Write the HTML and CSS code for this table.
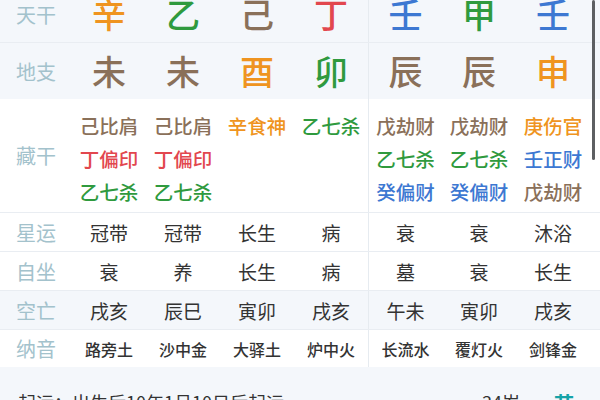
FILE: index.html
```html
<!DOCTYPE html>
<html lang="zh">
<head>
<meta charset="utf-8">
<link rel="stylesheet" href="styles.css">
</head>
<body>
<div class="page">
  <div class="row big tint line">
    <div class="label">天干</div>
    <div class="cell orange">辛</div>
    <div class="cell green">乙</div>
    <div class="cell brown">己</div>
    <div class="cell red">丁</div>
    <div class="cell sep blue">壬</div>
    <div class="cell green">甲</div>
    <div class="cell blue">壬</div>
  </div>
  <div class="row big tint">
    <div class="label">地支</div>
    <div class="cell brown">未</div>
    <div class="cell brown">未</div>
    <div class="cell orange">酉</div>
    <div class="cell green">卯</div>
    <div class="cell sep brown">辰</div>
    <div class="cell brown">辰</div>
    <div class="cell orange">申</div>
  </div>
  <div class="row hidden line">
    <div class="label">藏干</div>
    <div class="cell stack"><span class="brown">己比肩</span><span class="red">丁偏印</span><span class="green">乙七杀</span></div>
    <div class="cell stack"><span class="brown">己比肩</span><span class="red">丁偏印</span><span class="green">乙七杀</span></div>
    <div class="cell stack"><span class="orange">辛食神</span></div>
    <div class="cell stack"><span class="green">乙七杀</span></div>
    <div class="cell stack sep"><span class="brown">戊劫财</span><span class="green">乙七杀</span><span class="blue">癸偏财</span></div>
    <div class="cell stack"><span class="brown">戊劫财</span><span class="green">乙七杀</span><span class="blue">癸偏财</span></div>
    <div class="cell stack"><span class="orange">庚伤官</span><span class="blue">壬正财</span><span class="brown">戊劫财</span></div>
  </div>
  <div class="row text line">
    <div class="label">星运</div>
    <div class="cell">冠带</div>
    <div class="cell">冠带</div>
    <div class="cell">长生</div>
    <div class="cell">病</div>
    <div class="cell sep">衰</div>
    <div class="cell">衰</div>
    <div class="cell">沐浴</div>
  </div>
  <div class="row text line">
    <div class="label">自坐</div>
    <div class="cell">衰</div>
    <div class="cell">养</div>
    <div class="cell">长生</div>
    <div class="cell">病</div>
    <div class="cell sep">墓</div>
    <div class="cell">衰</div>
    <div class="cell">长生</div>
  </div>
  <div class="row text tint line">
    <div class="label">空亡</div>
    <div class="cell">戌亥</div>
    <div class="cell">辰巳</div>
    <div class="cell">寅卯</div>
    <div class="cell">戌亥</div>
    <div class="cell sep">午未</div>
    <div class="cell">寅卯</div>
    <div class="cell">戌亥</div>
  </div>
  <div class="row small">
    <div class="label">纳音</div>
    <div class="cell">路旁土</div>
    <div class="cell">沙中金</div>
    <div class="cell">大驿土</div>
    <div class="cell">炉中火</div>
    <div class="cell sep">长流水</div>
    <div class="cell">覆灯火</div>
    <div class="cell">剑锋金</div>
  </div>
  <div class="info">
    <span class="start">起运：出生后10年1月10日后起运</span>
    <span class="age">34岁</span>
    <span class="tag">节</span>
  </div>
</div>
<div class="scrollbar"></div>
</body>
</html>
```
FILE: styles.css
```css
html, body {
  margin: 0;
  padding: 0;
  width: 600px;
  height: 400px;
  overflow: hidden;
  background: #f4f7fb;
  font-family: "Noto Sans CJK SC", "Noto Sans", sans-serif;
}
.page {
  margin-top: -14px;
  width: 600px;
}
.row {
  display: grid;
  grid-template-columns: 72px repeat(7, 74px) 10px;
  background: #ffffff;
}
.row.tint { background: #f4f7fb; }
.row.line { border-bottom: 1px solid #e9edf2; }
.label {
  display: flex;
  align-items: center;
  justify-content: center;
  font-size: 20px;
  color: #a3c2cc;
}
.cell {
  display: flex;
  align-items: center;
  justify-content: center;
  color: #333333;
}
.cell.sep { border-left: 1px solid #e6ebf0; }
.big { height: 56px; }
.big .cell { font-size: 34px; line-height: 1; font-weight: 500; }
.hidden { height: 113px; }
.stack {
  flex-direction: column;
  justify-content: flex-start;
  padding-top: 10px;
  font-size: 19.5px;
  line-height: 33px;
  font-weight: 500;
}
.text { height: 38px; }
.text .cell { font-size: 19px; }
.small { height: 37px; }
.small .cell { font-size: 16px; font-weight: 500; }
.orange { color: #ef9420; }
.green { color: #2f9a3e; }
.brown { color: #8a7059; }
.red { color: #e2474e; }
.blue { color: #3d78d2; }
.info {
  display: flex;
  align-items: flex-start;
  padding: 22px 0 0 18px;
  font-size: 18px;
  color: #333333;
}
.start { flex: 1; }
.age { margin-right: 34px; }
.tag {
  margin-right: 26px;
  color: #16a3a8;
  font-weight: bold;
  font-size: 20px;
}
.scrollbar {
  position: absolute;
  top: 0;
  left: 592px;
  width: 3px;
  height: 160px;
  border-radius: 2px;
  background: #5d5f62;
}
```
